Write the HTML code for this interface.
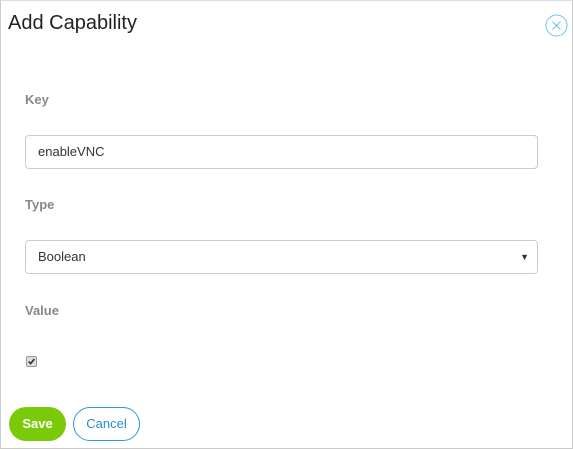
<!DOCTYPE html>
<html><head><style>
*{box-sizing:border-box;margin:0;padding:0}
body{width:573px;height:450px;background:#fff;font-family:"Liberation Sans",Arial,sans-serif;position:relative;overflow:hidden}
.frame{position:absolute;left:0;top:0;width:573px;height:449px;border:1px solid #ccc;border-top-color:#ddd}
.title{position:absolute;left:8px;top:12px;font-size:20px;color:#222}
.close{position:absolute;left:545px;top:14px;width:23px;height:23px}
.lbl{position:absolute;left:25px;font-size:13px;font-weight:bold;color:#888}
.box{position:absolute;left:25px;width:513px;height:34px;border:1px solid #ccc;border-radius:4px;font-size:13px;color:#333;padding:0 12px;line-height:32px}
.arrow{position:absolute;right:8px;top:0;font-size:9px;color:#333}
.cb{position:absolute;left:26px;top:356px;width:11px;height:11px;border:1px solid #999;border-radius:2px;background:#ddd}
.btn{position:absolute;top:407px;height:34px;border-radius:17px;font-size:13px;text-align:center;line-height:34px}
</style></head><body>
<div class="frame"></div>
<div class="title">Add Capability</div>
<svg class="close" viewBox="0 0 23 23"><circle cx="11.5" cy="11.5" r="10.5" fill="none" stroke="#6cc4ee" stroke-width="1"/><path d="M7.5 7.5L15.5 15.5M15.5 7.5L7.5 15.5" stroke="#6cc4ee" stroke-width="1"/></svg>
<div class="lbl" style="top:92px">Key</div>
<div class="box" style="top:135px">enableVNC</div>
<div class="lbl" style="top:197px">Type</div>
<div class="box" style="top:240px">Boolean<span class="arrow">▼</span></div>
<div class="lbl" style="top:303px">Value</div>
<div class="cb"><svg viewBox="0 0 11 11" width="9" height="9" style="position:absolute;left:0;top:0"><path d="M2 5.5L4.5 8L9 2.5" stroke="#333" stroke-width="2" fill="none"/></svg></div>
<div class="btn" style="left:9px;width:57px;background:#7aca0a;color:#fff;font-weight:bold">Save</div>
<div class="btn" style="left:73px;width:67px;border:1px solid #2a9ad8;color:#2a8ad0;line-height:32px">Cancel</div>
</body></html>
